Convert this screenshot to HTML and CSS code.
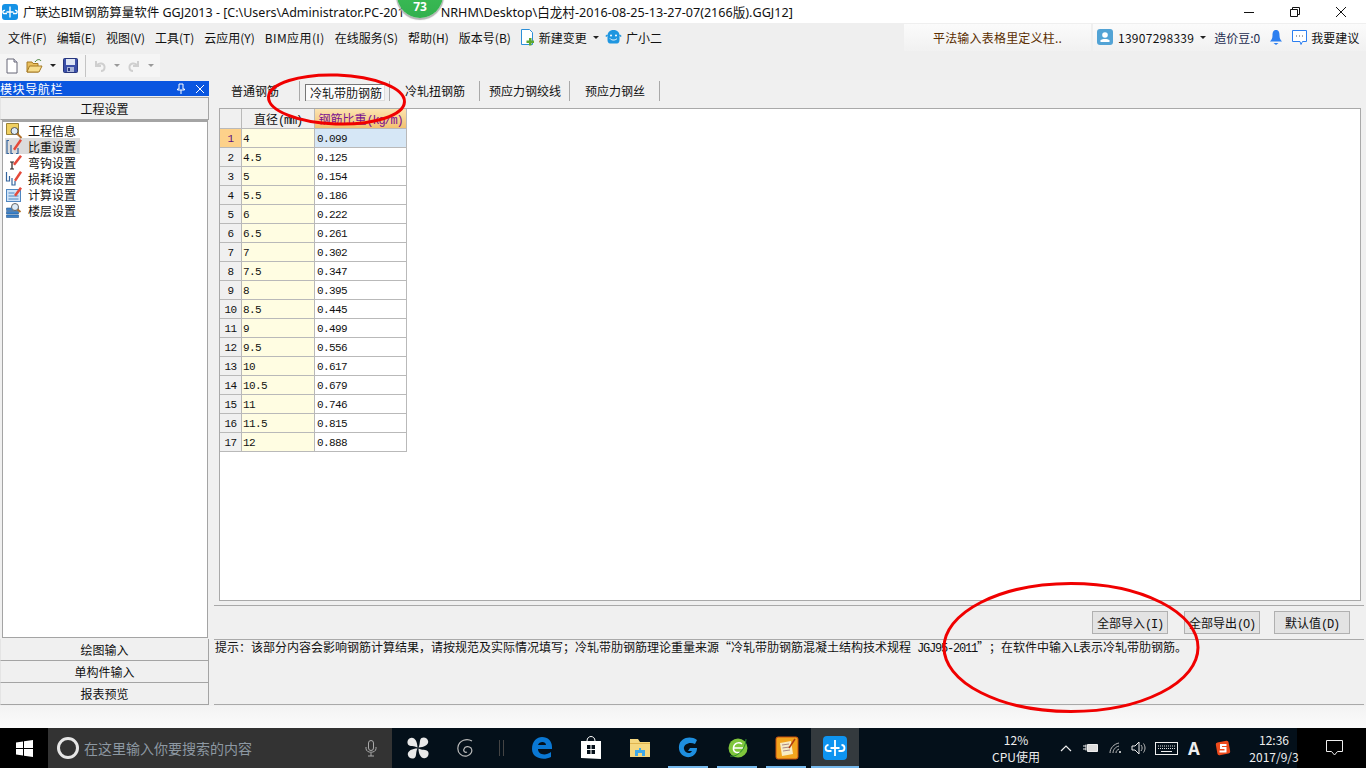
FILE: index.html
```html
<!DOCTYPE html>
<html lang="zh-CN">
<head>
    <title>GGJ2013</title>
    <link rel="stylesheet" href="styles.css">
</head>
<body>
    <div class="title-bar">
        <svg class="app-icon" width="16" height="16" viewBox="0 0 16 16"><rect width="16" height="16" rx="3" fill="#1592e6"/><path d="M8 2.500v11M4.500 8h7M3 6.500a1.600 1.600 0 1 0 0 3h2M13 6.500a1.600 1.600 0 1 1 0 3h-2" stroke="#fff" stroke-width="1.400" fill="none"/></svg>
        <span class="title-text">广联达BIM钢筋算量软件 GGJ2013 - [C:\Users\Administrator.PC-201</span>
        <span class="title-text title-rest">NRHM\Desktop\白龙村-2016-08-25-13-27-07(2166版).GGJ12]</span>
        <div class="win-buttons">
            <svg width="14" height="14" viewBox="0 0 14 14"><path d="M2 7.500h10" stroke="#111"/></svg>
            <svg width="14" height="14" viewBox="0 0 14 14"><path d="M2.500 4.500h7v7h-7zM4.500 4.500v-2h7v7h-2" stroke="#111" fill="none"/></svg>
            <svg width="14" height="14" viewBox="0 0 14 14"><path d="M2 2l10 10M12 2L2 12" stroke="#111"/></svg>
        </div>
    </div>

    <div class="menu-bar">
        <span class="menu-item">文件(F)</span>
        <span class="menu-item">编辑(E)</span>
        <span class="menu-item">视图(V)</span>
        <span class="menu-item">工具(T)</span>
        <span class="menu-item">云应用(Y)</span>
        <span class="menu-item menu-bim">BIM应用(I)</span>
        <span class="menu-item">在线服务(S)</span>
        <span class="menu-item">帮助(H)</span>
        <span class="menu-item">版本号(B)</span>
        <span class="menu-icon-item change">
            <svg width="15" height="17" viewBox="0 0 15 17"><path d="M1.500.500h8l3 3v12h-11z" fill="#fff" stroke="#2c8fd8"/><path d="M9 9h2.500v2.500H14v2.500h-2.500v2.500H9V14H6.500v-2.500H9z" fill="#5da72f"/></svg>
            新建变更
            <i class="caret tight"></i>
        </span>
        <span class="menu-icon-item robot">
            <svg width="17" height="16" viewBox="0 0 17 16"><path d="M8.500 1C4.500 1 2.500 3.500 2.500 6.500V11c0 2 1 3.500 2.500 3.500h7c1.500 0 2.500-1.500 2.500-3.500V6.500C14.500 3.500 12.500 1 8.500 1z" fill="#1f96e0"/><circle cx="6" cy="6.500" r="1" fill="#fff"/><circle cx="11" cy="6.500" r="1" fill="#fff"/><path d="M5 9.500c1.500 2 5.500 2 7 0" stroke="#fff" fill="none"/><path d="M2.500 6L.8 7.500M14.500 6l1.700 1.500" stroke="#1f96e0" stroke-width="1.500"/></svg>
            广小二
        </span>
        <span class="menu-spacer"></span>
        <span class="search-tip">平法输入表格里定义柱..</span>
        <div class="user-box">
            <svg width="16" height="16" viewBox="0 0 16 16"><rect width="16" height="16" rx="3" fill="#52a3d5"/><circle cx="8" cy="6" r="2.800" fill="#fff"/><path d="M3.500 13v-2c2-1.500 7-1.500 9 0v2z" fill="#fff"/></svg>
            <span class="user-phone">13907298339</span>
            <i class="caret"></i>
            <span class="user-beans">造价豆:0</span>
            <svg width="14" height="17" viewBox="0 0 14 17"><path d="M7 1C4 1 3.500 3.500 3.500 6.500 3.500 9.500 2.500 11 1 12.500h12C11.500 11 10.500 9.500 10.500 6.500 10.500 3.500 10 1 7 1z" fill="#2c7ff0"/><path d="M4.500 14h5L7 16z" fill="#2c7ff0"/></svg>
            <svg class="chat-icon" width="17" height="17" viewBox="0 0 17 17"><path d="M1.500 1.500h14v11h-4l-1.500 3-1-3h-7.500z" fill="#fff" stroke="#2c7ff0"/><path d="M5 7h1M8 7h1M11 7h1" stroke="#555"/></svg>
            <span>我要建议</span>
        </div>
    </div>

    <div class="tool-bar">
        <div class="tool-group">
            <svg width="14" height="16" viewBox="0 0 14 16"><path d="M2 1h7l3 3v11H2z" fill="#fff" stroke="#667"/><path d="M9 1v3h3" fill="#dde" stroke="#667"/></svg>
            <svg width="17" height="16" viewBox="0 0 17 16"><path d="M1 4h5l1 1.500h5V14H1z" fill="#e9bf5d" stroke="#a67a25"/><path d="M3.500 8H16l-3 6H1z" fill="#f7dd8d" stroke="#a67a25"/><path d="M9 4c2-3 5-3 6-1" stroke="#3b7a2e" fill="none"/></svg>
            <i class="caret small"></i>
            <svg width="15" height="15" viewBox="0 0 15 15"><rect x=".5" y=".5" width="14" height="14" rx="1" fill="#3b4fa8" stroke="#27367d"/><rect x="3" y="1" width="9" height="6" fill="#dfe6f5"/><rect x="4" y="9" width="7" height="5" fill="#a8b4d8"/><rect x="5" y="10" width="2" height="3" fill="#27367d"/></svg>
            <span class="tool-sep"></span>
            <svg width="14" height="14" viewBox="0 0 14 14"><path d="M3 2v5h5" fill="none" stroke="#cfcfcf" stroke-width="2"/><path d="M3.500 6.500C6 3 12 4 11.500 9c-.2 2-2 3-3.500 3" fill="none" stroke="#cfcfcf" stroke-width="2"/></svg>
            <i class="caret small muted"></i>
            <svg width="14" height="14" viewBox="0 0 14 14"><path d="M11 2v5H6" fill="none" stroke="#cfcfcf" stroke-width="2"/><path d="M10.500 6.500C8 3 2 4 2.500 9c.2 2 2 3 3.500 3" fill="none" stroke="#cfcfcf" stroke-width="2"/></svg>
            <i class="caret small muted"></i>
        </div>
    </div>

    <div class="main">
        <div class="sidebar">
            <div class="side-head">
                <span>模块导航栏</span>
                <svg width="12" height="12" viewBox="0 0 12 12"><path d="M4 1h4v5h1.500v1h-7V6H4zM6 7v4" stroke="#fff" fill="none"/></svg>
                <svg width="12" height="12" viewBox="0 0 12 12"><path d="M2 2l8 8M10 2l-8 8" stroke="#fff"/></svg>
            </div>
            <div class="side-btn">工程设置</div>
            <div class="side-tree">
                <div class="tree-row">
                    <svg width="18" height="17" viewBox="0 0 18 17"><path d="M1.500 1.500h12v11h-12z" fill="#f0d060" stroke="#9a8236"/><circle cx="9.500" cy="9" r="3.500" fill="#dcebf7" stroke="#555"/><path d="M12 11.500l4.500 4.500" stroke="#b0702a" stroke-width="2"/></svg>
                    <span>工程信息</span>
                </div>
                <div class="tree-row selected">
                    <svg width="18" height="17" viewBox="0 0 18 17"><path d="M4 2.500H2v13h2M6 7v8.500H8M13 10v5.500h-2" stroke="#35659e" fill="none" stroke-width="1.200"/><path d="M8 11l7-10 2 1.500-7 10z" fill="#e4493a"/></svg>
                    <span>比重设置</span>
                </div>
                <div class="tree-row">
                    <svg width="18" height="17" viewBox="0 0 18 17"><path d="M5 8h4M7 8v7M5 15h4" stroke="#222" fill="none" stroke-width="1.200"/><path d="M8 10l7-9 2 1.500-7 9z" fill="#e4493a"/></svg>
                    <span>弯钩设置</span>
                </div>
                <div class="tree-row">
                    <svg width="18" height="17" viewBox="0 0 18 17"><path d="M1.500 2v9h3V6M7 8v7h3v-4" stroke="#35659e" fill="none" stroke-width="1.200"/><path d="M9 10l6-9 2 1.500-6 9z" fill="#e4493a"/></svg>
                    <span>损耗设置</span>
                </div>
                <div class="tree-row">
                    <svg width="18" height="17" viewBox="0 0 18 17"><rect x="1.500" y="3.500" width="14" height="12" fill="#cfe3f7" stroke="#4f86c0"/><path d="M3.500 7h6M3.500 10h10M3.500 13h10" stroke="#4f86c0"/><path d="M9 9l6-8 2 1.500-6 8z" fill="#e4493a"/></svg>
                    <span>计算设置</span>
                </div>
                <div class="tree-row">
                    <svg width="18" height="17" viewBox="0 0 18 17"><path d="M1.500 6h12v2.500h-12zM1.500 9.500h12V12h-12zM1.500 13h12v2.500h-12z" fill="#3d82c9" stroke="#26578f" stroke-width=".6"/><circle cx="10" cy="5" r="3.500" fill="#dcebf7" stroke="#666"/><path d="M12.500 7.500l3 2.500" stroke="#b0702a" stroke-width="2"/></svg>
                    <span>楼层设置</span>
                </div>
            </div>
            <div class="side-btn">绘图输入</div>
            <div class="side-btn">单构件输入</div>
            <div class="side-btn">报表预览</div>
        </div>

        <div class="content">
            <div class="tabs">
                <span class="tab tab-first">普通钢筋</span>
                <span class="tab tab-current"><span class="tab-box">冷轧带肋钢筋</span></span>
                <span class="tab">冷轧扭钢筋</span>
                <span class="tab tab-narrow">预应力钢绞线</span>
                <span class="tab">预应力钢丝</span>
            </div>
            <div class="grid-panel">
                <table class="grid">
                    <tr><th class="corner"></th><th class="col-d">直径<span class="latin">(mm)</span></th><th class="col-w">钢筋比重<span class="latin">(kg/m)</span></th></tr>
                    <tr class="current"><td class="num">1</td><td class="dia">4</td><td class="val">0.099</td></tr>
                    <tr><td class="num">2</td><td class="dia">4.5</td><td class="val">0.125</td></tr>
                    <tr><td class="num">3</td><td class="dia">5</td><td class="val">0.154</td></tr>
                    <tr><td class="num">4</td><td class="dia">5.5</td><td class="val">0.186</td></tr>
                    <tr><td class="num">5</td><td class="dia">6</td><td class="val">0.222</td></tr>
                    <tr><td class="num">6</td><td class="dia">6.5</td><td class="val">0.261</td></tr>
                    <tr><td class="num">7</td><td class="dia">7</td><td class="val">0.302</td></tr>
                    <tr><td class="num">8</td><td class="dia">7.5</td><td class="val">0.347</td></tr>
                    <tr><td class="num">9</td><td class="dia">8</td><td class="val">0.395</td></tr>
                    <tr><td class="num">10</td><td class="dia">8.5</td><td class="val">0.445</td></tr>
                    <tr><td class="num">11</td><td class="dia">9</td><td class="val">0.499</td></tr>
                    <tr><td class="num">12</td><td class="dia">9.5</td><td class="val">0.556</td></tr>
                    <tr><td class="num">13</td><td class="dia">10</td><td class="val">0.617</td></tr>
                    <tr><td class="num">14</td><td class="dia">10.5</td><td class="val">0.679</td></tr>
                    <tr><td class="num">15</td><td class="dia">11</td><td class="val">0.746</td></tr>
                    <tr><td class="num">16</td><td class="dia">11.5</td><td class="val">0.815</td></tr>
                    <tr><td class="num">17</td><td class="dia">12</td><td class="val">0.888</td></tr>
                </table>
            </div>
            <div class="action-row">
                <button class="action-btn">全部导入<span class="latin">(I)</span></button>
                <button class="action-btn">全部导出<span class="latin">(O)</span></button>
                <button class="action-btn">默认值<span class="latin">(D)</span></button>
            </div>
            <div class="hint">提示：该部分内容会影响钢筋计算结果，请按规范及实际情况填写；冷轧带肋钢筋理论重量来源<span class="quote-open">“</span>冷轧带肋钢筋混凝土结构技术规程<span class="latin"> JGJ95-2011</span><span class="quote-close">”</span>；在软件中输入<span class="latin">L</span>表示冷轧带肋钢筋。</div>
        </div>
    </div>
    <div class="status-strip"></div>

    <div class="taskbar">
        <div class="start">
            <svg width="17" height="17" viewBox="0 0 17 17"><path d="M0 2.500l7-1v6.500H0zM8 1.300L17 0v8H8zM0 9h7v6.500l-7-1zM8 9h9v8l-9-1.300z" fill="#fff"/></svg>
        </div>
        <div class="search-box">
            <span class="cortana"></span>
            <span class="search-text">在这里输入你要搜索的内容</span>
            <svg class="mic" width="12" height="17" viewBox="0 0 12 17"><rect x="3.500" y=".5" width="5" height="10" rx="2.500" fill="none" stroke="#aaa"/><path d="M1 7v1.500c0 5 10 5 10 0V7M6 13v3M3 16h6" fill="none" stroke="#aaa"/></svg>
        </div>
        <div class="task-icons">
            <span class="task-slot">
                <svg width="22" height="22" viewBox="0 0 22 22"><g fill="#e9e9e9"><path d="M10.500 10.500C10.500 5 8 .5 4.500 .8 1 1.200-.5 5 1 7.500 3 10 7 8.500 10.500 10.500z"/><path d="M11.500 10.500C17 10.500 21.500 8 21.200 4.500 20.800 1 17-.5 14.500 1 12 3 13.500 7 11.500 10.500z"/><path d="M11.500 11.500C11.500 17 14 21.500 17.500 21.200 21 20.800 22.500 17 21 14.500 19 12 15 13.500 11.500 11.500z"/><path d="M10.500 11.500C5 11.500 .5 14 .8 17.500 1.200 21 5 22.500 7.500 21 10 19 8.500 15 10.500 11.500z"/></g></svg>
            </span>
            <span class="task-slot">
                <svg width="20" height="20" viewBox="0 0 20 20"><path d="M16 3C11 0 3 2 2 9c-1 6 4 10 9 9 4-1 6-5 4-8-2-2-6-2-7 1-1 2 1 4 3 3" fill="none" stroke="#bbb" stroke-width="1.200"/></svg>
            </span>
            <span class="task-divider"></span>
            <span class="task-slot wide">
                <svg width="22" height="24" viewBox="0 0 22 24"><path d="M1 13C1 5 6 1 11 1c6 0 10 4 10 10v2H7c0 6 8 7 13 3v5c-8 4-19 1-19-8zM7 9h8c0-4-7-4-8 0z" fill="#0a78d4"/></svg>
            </span>
            <span class="task-slot wide">
                <svg width="22" height="26" viewBox="0 0 22 26"><path d="M7 6c0-6 8-6 8 0" fill="none" stroke="#fff"/><path d="M1 6l20 0v18l-20-1z" fill="#fff"/><path d="M7 10h3.500v4H7zM11.500 10H15v4h-3.500zM7 15h3.500v4H7zM11.500 15H15v4h-3.500z" fill="#05101a"/></svg>
            </span>
            <span class="task-slot wide">
                <svg width="22" height="20" viewBox="0 0 22 20"><path d="M1 1h8l2 3h10v15H1z" fill="#f5d77f"/><path d="M1 5h20v1H1z" fill="#e0b54f"/><path d="M6 18v-6h4v-2h2v2h4v6h-3v-3H9v3z" fill="#3fa9e8"/></svg>
            </span>
            <span class="task-slot wide running">
                <svg width="24" height="24" viewBox="0 0 24 24"><path d="M20 4C13-1 3 2 2 10c-1 8 6 12 11 11 4-1 7-4 7-9h-7l-2 3h4c-1 3-7 3-8-2C6 9 12 5 18 8z" fill="#1e8fe0"/></svg>
            </span>
            <span class="task-slot wide running">
                <svg width="24" height="24" viewBox="0 0 24 24"><circle cx="12" cy="12" r="9.500" fill="#7fc63c"/><path d="M7 12h10M16 8c-3-2.500-8-1-8.500 3.500S10 17 14 16.500" stroke="#fff" stroke-width="1.500" fill="none"/><path d="M4 20C10 22 20 14 20 3" fill="none" stroke="#2b8a2e"/></svg>
            </span>
            <span class="task-slot wide running">
                <svg width="24" height="24" viewBox="0 0 24 24"><rect x="1" y="1" width="22" height="22" rx="2" fill="#f2a51f" stroke="#c9500f"/><path d="M5 7l11-2 2 13-11 2z" fill="#f8ecc4"/><path d="M7 9l7-1M7.500 12l7-1M8 15l7-1" stroke="#a88"/><path d="M14 12l6-9" stroke="#b13d10" stroke-width="1.500"/></svg>
            </span>
            <span class="task-slot task-active">
                <svg width="24" height="24" viewBox="0 0 24 24"><rect width="24" height="24" rx="4" fill="#0f94f0"/><path d="M12 4v16M7.500 12h9M5.500 9a3 3 0 1 0 0 6h3M18.500 9a3 3 0 1 1 0 6h-3" stroke="#fff" stroke-width="1.800" fill="none"/></svg>
            </span>
        </div>
        <div class="tray">
            <div class="cpu"><span>12%</span><span>CPU使用</span></div>
            <svg class="tray-up" width="12" height="8" viewBox="0 0 12 8"><path d="M1 7l5-5 5 5" stroke="#eee" fill="none" stroke-width="1.200"/></svg>
            <svg class="tray-power" width="15" height="12" viewBox="0 0 15 12"><path d="M4.500 2.500h10v7h-10z" fill="#ddd" stroke="#eee"/><path d="M0 4h3M0 7h3M3 2.500v6" stroke="#eee"/></svg>
            <svg class="tray-wifi" width="14" height="12" viewBox="0 0 14 12"><path d="M1 11c0-5 4-9 9-10M4 11c0-3 2-6 6-7M7 11c0-2 1-3 3-4" stroke="#bbb" fill="none"/><circle cx="11" cy="10" r="1" fill="#eee"/></svg>
            <svg class="tray-sound" width="16" height="14" viewBox="0 0 16 14"><path d="M1 5h3l4-4v12l-4-4H1z" fill="none" stroke="#eee"/><path d="M10 4c1.500 2 1.500 4 0 6M12.500 2.500c2 3 2 6 0 9" stroke="#bbb" fill="none"/></svg>
            <svg class="tray-keys" width="23" height="13" viewBox="0 0 23 13"><rect x=".5" y=".5" width="22" height="12" fill="none" stroke="#eee"/><path d="M3 4h17M3 6.500h17" stroke="#ddd" stroke-dasharray="1 1"/><path d="M6 9.500h11" stroke="#eee"/></svg>
            <span class="ime">A</span>
            <svg class="tray-sogou" width="16" height="16" viewBox="0 0 16 16"><rect x="1.500" y="1.500" width="13" height="13" rx="2" fill="#ee4a1b" transform="rotate(-10 8 8)"/><path d="M11.500 5H6v3h4.500v3.500H4.500" stroke="#fff" stroke-width="2" fill="none"/></svg>
            <div class="clock"><span>12:36</span><span>2017/9/3</span></div>
            <svg class="notify" width="17" height="16" viewBox="0 0 17 16"><path d="M.5.500h16v11h-5l-3 3.500-3-3.500h-5z" fill="none" stroke="#eee"/></svg>
        </div>
    </div>

    <div class="badge"><span>73</span></div>
    <svg class="marks" width="1366" height="768" viewBox="0 0 1366 768">
        <ellipse cx="336.500" cy="99.500" rx="68" ry="24.500" transform="rotate(2 336.500 99.500)"/>
        <ellipse cx="1071" cy="647.500" rx="127" ry="64"/>
    </svg>
</body>
</html>
```

FILE: styles.css
```css
html, body {
    margin: 0;
    padding: 0;
}

body {
    width: 1366px;
    height: 768px;
    overflow: hidden;
    position: relative;
    background-color: #f0f0f0;
    color: #111;
    font-family: "Noto Sans CJK SC", "Noto Sans", sans-serif;
    font-size: 12px;
}

svg {
    display: block;
    flex: none;
}

/* half width latin next to 12px hanzi, 6px a character */
.latin {
    font-family: "Liberation Mono", monospace;
    font-size: 12px;
    letter-spacing: -1.200px;
    white-space: pre;
}

/* Title bar */
.title-bar {
    display: flex;
    align-items: center;
    height: 23px;
    background-color: #fff;
    padding-left: 2px;
    box-sizing: border-box;
}

.title-text {
    margin-left: 5px;
    font-family: "Noto Sans", "Noto Sans CJK SC", sans-serif;
    font-size: 12.500px;
    white-space: nowrap;
}

.title-rest {
    margin-left: 36px;
    font-size: 12.600px;
}

.win-buttons {
    display: flex;
    margin-left: auto;
    gap: 32px;
    padding-right: 18px;
}

/* Menu bar */
.menu-bar {
    display: flex;
    align-items: center;
    height: 28px;
    padding-left: 8px;
    box-sizing: border-box;
    background-color: #efefef;
}

.menu-item {
    margin-right: 10px;
    white-space: nowrap;
}

.menu-bim {
    letter-spacing: .4px;
}

.menu-icon-item {
    display: flex;
    align-items: center;
    gap: 4px;
    white-space: nowrap;
}

.change {
    margin-left: -1px;
}

.robot {
    margin-left: 6px;
}

.menu-spacer {
    flex: 1;
}

.search-tip {
    width: 187px;
    height: 27px;
    line-height: 27px;
    text-align: center;
    color: #5a2d00;
    background: linear-gradient(#fbfbfb, #f1f1f1);
    letter-spacing: .2px;
}

.user-box {
    display: flex;
    align-items: center;
    height: 27px;
    width: 273px;
    margin-left: 2px;
    padding-left: 4px;
    box-sizing: border-box;
    background: linear-gradient(#fbfbfb, #f1f1f1);
    white-space: nowrap;
}

.user-phone {
    margin-left: 5px;
    letter-spacing: .27px;
}

.user-beans {
    margin: 0 9px 0 8px;
    color: #1c2c50;
}

.chat-icon {
    margin: 0 3px 0 8px;
}

.caret {
    display: inline-block;
    width: 0;
    height: 0;
    margin-left: 6px;
    border-left: 3px solid transparent;
    border-right: 3px solid transparent;
    border-top: 3px solid #222;
}

.caret.tight {
    margin-left: 2px;
}

.caret.small {
    margin-left: 0;
}

.caret.muted {
    border-top-color: #999;
}

/* Toolbar */
.tool-bar {
    height: 29px;
    padding-top: 3px;
    box-sizing: border-box;
    background-color: #efefef;
}

.tool-group {
    display: flex;
    align-items: center;
    gap: 7px;
    width: 160px;
    height: 23px;
    padding-left: 5px;
    box-sizing: border-box;
    background-color: #f5f5f5;
}

.tool-sep {
    width: 1px;
    height: 22px;
    background-color: #c4c4c4;
}

/* Main area */
.main {
    display: flex;
    height: 626px;
    padding: 1px 0;
    box-sizing: border-box;
}

.sidebar {
    display: flex;
    flex-direction: column;
    width: 209px;
    flex: none;
}

.side-head {
    display: flex;
    align-items: center;
    height: 15px;
    flex: none;
    background-color: #0a56e0;
    color: #fff;
    gap: 7px;
    padding-right: 3px;
}

.side-head span {
    margin-right: auto;
    letter-spacing: .6px;
}

.side-btn {
    height: 22px;
    line-height: 21px;
    flex: none;
    box-sizing: border-box;
    text-align: center;
    border: 1px solid #a4a4a4;
    border-top-width: 0;
    border-left-color: #e4e4e4;
}

.side-head + .side-btn {
    height: 23px;
    margin-top: 1px;
    border-top-width: 1px;
}

.side-tree {
    flex: 1;
    margin: 0 1px 1px 2px;
    box-sizing: border-box;
    background-color: #fff;
    border: 1px solid #a4a4a4;
    border-top-width: 2px;
}

.tree-row {
    display: flex;
    align-items: center;
    height: 16px;
    width: 75px;
    margin-left: 2px;
    gap: 5px;
}

.tree-row.selected {
    background-color: #dcdcdc;
}

/* Right side */
.content {
    display: flex;
    flex-direction: column;
    flex: 1;
    margin-left: 5px;
    margin-right: 2px;
}

.tabs {
    display: flex;
    align-items: flex-start;
    height: 21px;
    margin-bottom: 6px;
    flex: none;
}

.tab {
    display: block;
    height: 20px;
    line-height: 20px;
    padding: 0 14px 0 15px;
    border-right: 1px solid #a9a9a9;
    white-space: nowrap;
}

.tab-first {
    padding: 0 20px 0 17px;
}

.tab-narrow {
    padding: 0 8px 0 9px;
}

.tab-current {
    padding: 0 4px 0 5px;
}

.tab-box {
    display: block;
    height: 17px;
    line-height: 17px;
    margin-top: 3px;
    padding: 0 3px 0 5px;
    background-color: #fcfcfc;
    box-shadow: inset 1px 1px 0 #777, inset -1px -1px 0 #ddd;
}

.grid-panel {
    flex: none;
    height: 493px;
    margin: 0 3px 0 5px;
    box-sizing: border-box;
    background-color: #fff;
    border: 1px solid #a9a9a9;
}

.grid {
    border-collapse: collapse;
    table-layout: fixed;
    width: 186px;
    font-family: "Liberation Mono", monospace;
    font-size: 11px;
    letter-spacing: -.6px;
}

.grid th, .grid td {
    height: 17px;
    padding: 1px 0 0;
    border: 1px solid #b9b9b9;
    font-weight: normal;
    white-space: nowrap;
    overflow: hidden;
}

.grid tr:first-child th {
    height: 19px;
    padding: 0;
    border-top: 0;
    font-family: "Noto Sans CJK SC", sans-serif;
    font-size: 12px;
    letter-spacing: 0;
}

.grid th:first-child, .grid td:first-child {
    border-left: 0;
}

.corner {
    width: 21px;
    background-color: #f0f0f0;
}

.col-d {
    width: 72px;
    background-color: #f0f0f0;
}

.col-w {
    width: 91px;
    color: #7a1090;
    background: linear-gradient(#fbe3b0, #f3c170);
}

.num {
    text-align: center;
    background-color: #f0f0f0;
}

.grid .dia {
    padding-left: 1px;
    background-color: #fffde2;
}

.grid .val {
    padding-left: 2px;
}

.current .num {
    background-color: #fdd18a;
    color: #5b0f80;
}

.current .val {
    background-color: #d6e7f6;
}

.action-row {
    display: flex;
    justify-content: flex-end;
    align-items: center;
    gap: 14px;
    height: 35px;
    padding-right: 14px;
    margin-top: 4px;
    box-sizing: border-box;
    flex: none;
    border-top: 1px solid #a9a9a9;
    border-bottom: 1px solid #a9a9a9;
}

.action-btn {
    width: 76px;
    height: 23px;
    padding: 0;
    font-family: "Noto Sans CJK SC", sans-serif;
    font-size: 12px;
    color: #111;
    background-color: #e3e3e3;
    border: 1px solid #b0b0b0;
    white-space: nowrap;
}

.action-btn:first-child {
    margin-right: 2px;
}

.hint {
    flex: 1;
    padding-left: 1px;
    line-height: 14px;
    white-space: nowrap;
    border-bottom: 1px solid #a9a9a9;
}

.quote-open, .quote-close {
    display: inline-block;
    width: 12px;
}

.quote-open {
    text-align: right;
}

.status-strip {
    height: 22px;
    background: linear-gradient(#f3f3f3, #fbfbfb);
}

/* Taskbar */
.taskbar {
    display: flex;
    align-items: center;
    height: 40px;
    background: linear-gradient(to right, #04101a 1297px, #000 1297px);
    color: #eee;
}

.start {
    display: flex;
    align-items: center;
    justify-content: center;
    width: 48px;
    height: 40px;
    background-color: #000;
}

.search-box {
    display: flex;
    align-items: center;
    width: 344px;
    height: 40px;
    padding-left: 9px;
    box-sizing: border-box;
    background-color: #333;
}

.cortana {
    width: 16px;
    height: 16px;
    border: 3px solid #e6e6e6;
    border-radius: 50%;
}

.search-text {
    margin-left: 5px;
    color: #8d98a2;
    font-size: 14px;
}

.mic {
    margin-left: auto;
    margin-right: 15px;
}

.task-icons {
    display: flex;
    align-items: center;
    height: 40px;
    width: 467px;
    padding-left: 2px;
    box-sizing: border-box;
}

.task-slot {
    position: relative;
    display: flex;
    align-items: center;
    justify-content: center;
    width: 48px;
    height: 40px;
    flex: none;
}

.task-slot.wide {
    width: 49px;
}

.running::after {
    content: "";
    position: absolute;
    left: 4px;
    right: 5px;
    bottom: 0;
    height: 2px;
    background-color: #76b9ed;
}

.task-divider {
    width: 3px;
    height: 16px;
    flex: none;
    margin: 0 13px 0 9px;
    border-left: 1px solid #444;
    border-right: 1px solid #444;
}

.task-active {
    background-color: #343a3e;
}

.task-active::after {
    content: "";
    position: absolute;
    left: 0;
    right: 0;
    bottom: 0;
    height: 2px;
    background-color: #76b9ed;
}

.tray {
    display: flex;
    align-items: center;
    flex: 1;
    height: 40px;
    padding-left: 127px;
    box-sizing: border-box;
}

.cpu, .clock {
    display: flex;
    flex-direction: column;
    align-items: center;
    line-height: 17px;
    flex: none;
    width: 60px;
    white-space: nowrap;
}

.tray-up {
    margin-left: 14px;
}

.tray-power {
    margin-left: 11px;
}

.tray-wifi {
    margin-left: 11px;
}

.tray-sound, .tray-keys {
    margin-left: 8px;
}

.ime {
    margin-left: 10px;
    width: 12px;
    font-family: "Noto Sans", sans-serif;
    font-size: 17px;
    font-weight: 700;
    text-align: center;
}

.tray-sogou {
    margin-left: 15px;
}

.clock {
    margin-left: 13px;
}

.notify {
    margin-left: 22px;
}

/* Floating things over the window */
.badge {
    position: absolute;
    left: 397px;
    top: -28px;
    width: 46px;
    height: 46px;
    border-radius: 50%;
    background: linear-gradient(#3fc35a, #33b04e);
    box-shadow: 0 1px 1px 1px #b4b4b4;
    color: #fff;
    text-align: center;
}

.badge span {
    position: absolute;
    left: 0;
    right: 0;
    top: 28px;
    font-family: "Noto Sans", sans-serif;
    font-size: 12px;
    font-weight: 700;
    line-height: 14px;
}

.marks {
    position: absolute;
    left: 0;
    top: 0;
    pointer-events: none;
}

.marks ellipse {
    fill: none;
    stroke: #f00000;
    stroke-width: 3;
}
```
